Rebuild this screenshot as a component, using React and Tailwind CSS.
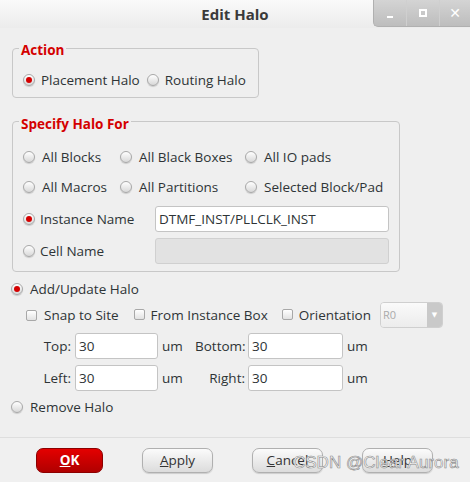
import React from 'react';

const font = { fontFamily: '"Open Sans", "DejaVu Sans", sans-serif' };

const Radio = ({ checked }) => (
    <span className="inline-flex items-center justify-center w-[12px] h-[12px] shrink-0 rounded-full border border-[#a8a8a8] bg-gradient-to-b from-[#ffffff] to-[#d8d8d8] shadow-[0_1px_1px_rgba(0,0,0,0.15)]">
        {checked && <span className="w-[6px] h-[6px] rounded-full bg-[#d40000]" />}
    </span>
);

const Check = () => (
    <span className="inline-block w-[11px] h-[11px] shrink-0 rounded-[2px] border border-[#a8a8a8] bg-gradient-to-b from-[#ffffff] to-[#e2e2e2]" />
);

const Opt = ({ checked, label, gap = 'gap-[6px]' }) => (
    <div className={`flex items-center ${gap}`}>
        <Radio checked={checked} />
        <span>{label}</span>
    </div>
);

const Field = ({ value, w = 'w-[83px]' }) => (
    <div className={`${w} h-[26px] rounded-[3px] border border-[#c4c4c4] bg-white px-[3px] flex items-center`}>{value}</div>
);

const Btn = ({ children, red }) => (
    <button
        className={
            red
                ? 'w-[67px] h-[25px] rounded-[7px] border border-[#8c0000] bg-gradient-to-b from-[#e40000] to-[#b00000] text-white font-bold text-[13.5px]'
                : 'w-[71px] h-[25px] rounded-[7px] border border-[#b0b0b0] bg-gradient-to-b from-[#fbfbfb] to-[#dcdcdc] text-[#333] text-[13.5px] shadow-[0_1px_1px_rgba(0,0,0,0.15)]'
        }
    >
        {children}
    </button>
);

export default function App() {
    return (
        <div style={font} className="relative w-[470px] h-[482px] bg-[#efefef] text-[13.5px] leading-[18px] text-[#2e3436] overflow-hidden flex flex-col">
            {/* title bar */}
            <div className="relative h-[28px] bg-gradient-to-b from-[#fafafa] to-[#ececec] flex items-center justify-center">
                <span className="font-bold text-[15px] text-[#3a3a3a]">Edit Halo</span>
                <div className="absolute right-0 top-0 h-[27px] flex rounded-bl-[5px] overflow-hidden bg-gradient-to-b from-[#d4d4d4] to-[#bdbdbd] border-l border-b border-[#b0b0b0]">
                    <div className="w-[33px] flex items-end justify-center pb-[8px] border-r border-[#cfcfcf]">
                        <span className="w-[6px] h-[2px] bg-white" />
                    </div>
                    <div className="w-[33px] flex items-center justify-center border-r border-[#cfcfcf]">
                        <span className="w-[8px] h-[8px] border-2 border-white" />
                    </div>
                    <div className="w-[30px] flex items-center justify-center text-white font-bold text-[14px]">✕</div>
                </div>
            </div>

            <div className="flex flex-col px-[12px] pt-[13px]">
                {/* Action */}
                <fieldset className="w-[247px] h-[57px] border border-[#c8c8c8] rounded-[4px] px-[10px] pt-[16px]">
                    <legend className="relative top-[2px] -ml-[4px] px-[2px] text-[#d40000] font-bold text-[13.5px] leading-[14px]">Action</legend>
                    <div className="flex items-center gap-[7px]">
                        <Opt checked label="Placement Halo" />
                        <Opt label="Routing Halo" />
                    </div>
                </fieldset>

                {/* Specify Halo For */}
                <fieldset className="mt-[16px] w-[388px] border border-[#c8c8c8] rounded-[4px] pl-[10px] pt-[20px] pb-[7px]">
                    <legend className="relative top-[3px] -ml-[4px] px-[2px] text-[#d40000] font-bold text-[13.5px] leading-[14px]">Specify Halo For</legend>
                    <div className="grid grid-cols-[97px_125px_1fr] gap-y-[12px]">
                        <Opt label="All Blocks" gap="gap-[7px]" />
                        <Opt label="All Black Boxes" gap="gap-[7px]" />
                        <Opt label="All IO pads" gap="gap-[7px]" />
                        <Opt label="All Macros" gap="gap-[7px]" />
                        <Opt label="All Partitions" gap="gap-[7px]" />
                        <Opt label="Selected Block/Pad" gap="gap-[7px]" />
                    </div>
                    <div className="mt-[10px] flex items-center">
                        <div className="w-[132px]"><Opt checked label="Instance Name" gap="gap-[5px]" /></div>
                        <Field value="DTMF_INST/PLLCLK_INST" w="w-[234px]" />
                    </div>
                    <div className="mt-[6px] flex items-center">
                        <div className="w-[132px]"><Opt label="Cell Name" gap="gap-[5px]" /></div>
                        <div className="w-[234px] h-[26px] rounded-[3px] border border-[#d0d0d0] bg-[#e2e2e2]" />
                    </div>
                </fieldset>

                {/* Add/Update */}
                <div className="mt-[8px] flex flex-col">
                    <div className="flex items-center gap-[7px] -ml-[1px]">
                        <Radio checked />
                        <span>Add/Update Halo</span>
                    </div>
                    <div className="mt-[4px] ml-[14px] flex items-center h-[26px]">
                        <Check />
                        <span className="ml-[7px]">Snap to Site</span>
                        <span className="ml-[15px]"><Check /></span>
                        <span className="ml-[6px]">From Instance Box</span>
                        <span className="ml-[14px]"><Check /></span>
                        <span className="ml-[6px]">Orientation</span>
                        <div className="ml-auto mr-[15px] w-[63px] h-[26px] flex rounded-[4px] border border-[#cfcfcf] overflow-hidden">
                            <div className="flex-1 bg-gradient-to-b from-[#fafafa] to-[#ececec] text-[#aaa] text-[11px] flex items-center pl-[2px]">R0</div>
                            <div className="w-[15px] bg-[#c9c9c9] flex items-center justify-center text-white text-[7px]">▼</div>
                        </div>
                    </div>
                    <div className="mt-[5px] ml-[12px] flex items-center">
                        <span className="w-[47px] text-right">Top:</span>
                        <span className="ml-[4px]"><Field value="30" /></span>
                        <span className="ml-[4px] w-[33px]">um</span>
                        <span className="w-[50px] text-right">Bottom:</span>
                        <span className="ml-[3px]"><Field value="30" w="w-[95px]" /></span>
                        <span className="ml-[4px]">um</span>
                    </div>
                    <div className="mt-[6px] ml-[12px] flex items-center">
                        <span className="w-[47px] text-right">Left:</span>
                        <span className="ml-[4px]"><Field value="30" /></span>
                        <span className="ml-[4px] w-[33px]">um</span>
                        <span className="w-[50px] text-right">Right:</span>
                        <span className="ml-[3px]"><Field value="30" w="w-[95px]" /></span>
                        <span className="ml-[4px]">um</span>
                    </div>
                    <div className="mt-[7px] flex items-center gap-[7px] -ml-[1px]">
                        <Radio />
                        <span>Remove Halo</span>
                    </div>
                </div>
            </div>

            {/* buttons */}
            <div className="mt-auto h-[45px] border-t border-[#dedede] bg-[#f0f0f0] flex items-center pl-[36px] gap-[39px]">
                <Btn red><span className="underline">O</span>K</Btn>
                <Btn><span className="underline">A</span>pply</Btn>
                <Btn><span className="underline">C</span>ancel</Btn>
                <Btn><span className="underline">H</span>elp</Btn>
            </div>

            <div
                className="absolute left-[293px] top-[454px] text-[17px] text-white leading-none"
                style={{ WebkitTextStroke: '0.6px #888', fontFamily: '"Liberation Sans", sans-serif' }}
            >
                CSDN @Clear Aurora
            </div>
        </div>
    );
}
